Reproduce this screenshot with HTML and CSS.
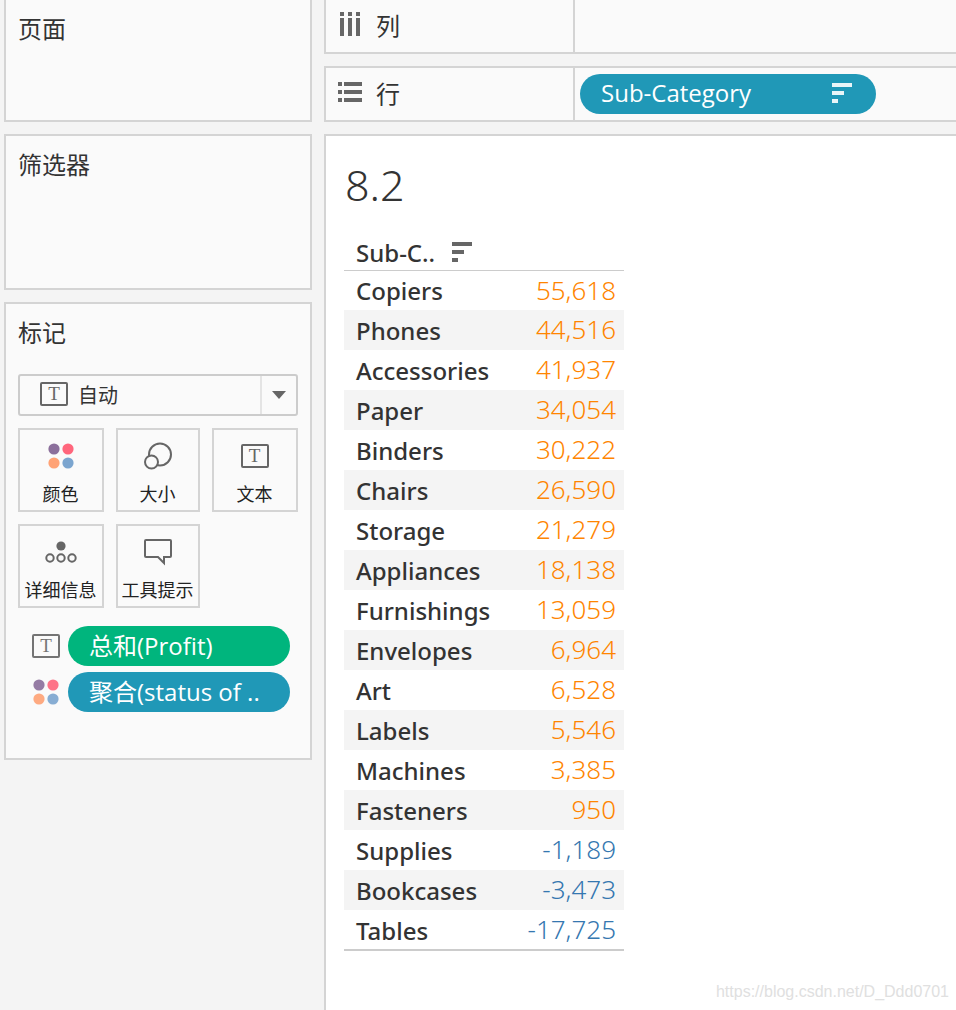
FILE: index.html
```html
<!DOCTYPE html>
<html lang="zh-CN">
<head>
<meta charset="utf-8">
<meta name="viewport" content="width=device-width, initial-scale=1">
<title>8.2</title>
<link rel="stylesheet" href="styles.css">
</head>
<body>
<svg class="defs" aria-hidden="true">
  <symbol id="icon-color" viewBox="0 0 28 28">
    <circle cx="7" cy="7" r="5.6" fill="#8b6f9b"/>
    <circle cx="21" cy="7" r="5.6" fill="#ff667c"/>
    <circle cx="7" cy="21" r="5.6" fill="#ffa275"/>
    <circle cx="21" cy="21" r="5.6" fill="#7ba5cf"/>
  </symbol>
  <symbol id="icon-sort" viewBox="0 0 20 20">
    <path d="M0 0h20v4H0zM0 8h12v4H0zM0 16h6v4H0z" fill="currentColor"/>
  </symbol>
</svg>
<div class="workspace">
  <aside class="sidebar">
    <section class="card pages"><h2 class="card-title">页面</h2></section>
    <section class="card filters"><h2 class="card-title">筛选器</h2></section>
    <section class="card marks">
      <h2 class="card-title">标记</h2>
      <div class="mark-type">
        <span class="mark-type-icon text-icon" aria-hidden="true">T</span>
        <select class="mark-select" aria-label="标记"><option>自动</option></select>
        <span class="mark-arrow"><svg width="14" height="8" viewBox="0 0 14 8" aria-hidden="true"><path d="M0 0h14L7 8z" fill="#666"/></svg></span>
      </div>
      <div class="mark-buttons">
        <button class="mark-button" type="button"><span class="mark-icon"><svg width="28" height="28" viewBox="0 0 28 28"><use href="#icon-color"/></svg></span>颜色</button>
        <button class="mark-button" type="button"><span class="mark-icon"><svg width="28" height="28" viewBox="0 0 28 28" fill="none" stroke="#666" stroke-width="2"><circle cx="16" cy="12.5" r="11"/><circle cx="7.5" cy="20" r="6.5" fill="#fafafa"/></svg></span>大小</button>
        <button class="mark-button" type="button"><span class="mark-icon"><span class="text-icon" aria-hidden="true">T</span></span>文本</button>
        <button class="mark-button" type="button"><span class="mark-icon"><svg width="32" height="24" viewBox="0 0 32 24" fill="none" stroke="#666" stroke-width="2"><circle cx="16" cy="6" r="4.6" fill="#666" stroke="none"/><circle cx="5" cy="18" r="3.7"/><circle cx="16" cy="18" r="3.7"/><circle cx="27" cy="18" r="3.7"/></svg></span>详细信息</button>
        <button class="mark-button" type="button"><span class="mark-icon"><svg width="28" height="28" viewBox="0 0 28 28" fill="none" stroke="#666" stroke-width="2"><path d="M2 2h24q1 0 1 1v15q0 1-1 1h-6v6l-6-6H2q-1 0-1-1V3q0-1 1-1z"/></svg></span>工具提示</button>
      </div>
      <ul class="mark-pills">
        <li class="mark-row"><span class="text-icon faded" aria-hidden="true">T</span><button class="pill measure" type="button">总和(Profit)</button></li>
        <li class="mark-row"><svg class="faded" width="28" height="28" aria-hidden="true"><use href="#icon-color"/></svg><button class="pill" type="button">聚合(status of ..</button></li>
      </ul>
    </section>
  </aside>
  <main class="main">
    <section class="shelf columns">
      <h2 class="shelf-name"><svg width="24" height="24" viewBox="0 0 24 24" aria-hidden="true"><path d="M2 0h4v4H2zM10 0h4v4h-4zM18 0h4v4h-4zM2 6h4v18H2zM10 6h4v18h-4zM18 6h4v18h-4z" fill="#666"/></svg>列</h2>
      <div class="shelf-fields"></div>
    </section>
    <section class="shelf rows">
      <h2 class="shelf-name"><svg width="24" height="20" viewBox="0 0 24 20" aria-hidden="true"><path d="M0 0h4v4H0zM0 8h4v4H0zM0 16h4v4H0zM6 0h18v4H6zM6 8h18v4H6zM6 16h18v4H6z" fill="#666"/></svg>行</h2>
      <div class="shelf-fields"><button class="pill row-pill" type="button">Sub-Category<svg class="pill-sort" width="20" height="20" aria-hidden="true"><use href="#icon-sort"/></svg></button></div>
    </section>
    <section class="view">
      <h1 class="view-title">8.2</h1>
      <table class="crosstab">
        <thead><tr><th colspan="2" scope="col"><span class="head">Sub-C..<svg width="20" height="20" aria-hidden="true"><use href="#icon-sort"/></svg></span></th></tr></thead>
        <tbody>
          <tr><th scope="row">Copiers</th><td>55,618</td></tr>
          <tr><th scope="row">Phones</th><td>44,516</td></tr>
          <tr><th scope="row">Accessories</th><td>41,937</td></tr>
          <tr><th scope="row">Paper</th><td>34,054</td></tr>
          <tr><th scope="row">Binders</th><td>30,222</td></tr>
          <tr><th scope="row">Chairs</th><td>26,590</td></tr>
          <tr><th scope="row">Storage</th><td>21,279</td></tr>
          <tr><th scope="row">Appliances</th><td>18,138</td></tr>
          <tr><th scope="row">Furnishings</th><td>13,059</td></tr>
          <tr><th scope="row">Envelopes</th><td>6,964</td></tr>
          <tr><th scope="row">Art</th><td>6,528</td></tr>
          <tr><th scope="row">Labels</th><td>5,546</td></tr>
          <tr><th scope="row">Machines</th><td>3,385</td></tr>
          <tr><th scope="row">Fasteners</th><td>950</td></tr>
          <tr><th scope="row">Supplies</th><td class="loss">-1,189</td></tr>
          <tr><th scope="row">Bookcases</th><td class="loss">-3,473</td></tr>
          <tr><th scope="row">Tables</th><td class="loss">-17,725</td></tr>
        </tbody>
      </table>
      <p class="watermark">https://blog.csdn.net/D_Ddd0701</p>
    </section>
  </main>
</div>
</body>
</html>
```
FILE: styles.css
```css
* { box-sizing: border-box; }
body, h1, h2, ul, p { margin: 0; padding: 0; }
body {
  background: #f4f4f4;
  color: #333;
  font-family: "Open Sans", "Noto Sans CJK SC", sans-serif;
  font-size: 24px;
}
button, select { font: inherit; color: inherit; margin: 0; }
svg { display: block; flex: none; }
.defs { position: absolute; width: 0; height: 0; }
.text-icon {
  display: block;
  width: 28px;
  height: 24px;
  border: 2px solid #666;
  border-radius: 2px;
  font-family: "Liberation Serif", serif;
  font-size: 19px;
  line-height: 20px;
  text-align: center;
  color: #666;
}

.workspace {
  display: grid;
  grid-template-columns: 308px 1fr;
  gap: 12px;
  min-height: 100vh;
  padding-left: 4px;
}
.sidebar { display: flex; flex-direction: column; gap: 12px; }
.card {
  background: #fafafa;
  border: 2px solid #d4d4d4;
  padding: 12px;
}
.card-title { font-family: "Noto Sans CJK SC", sans-serif; font-size: 24px; font-weight: 400; line-height: 32px; }
.pages { border-top: 0; min-height: 122px; }
.filters { min-height: 156px; }
.marks { min-height: 458px; }

.mark-type {
  display: grid;
  grid-template-columns: 1fr 36px;
  height: 42px;
  margin-top: 26px;
  border: 2px solid #ccc;
  border-radius: 3px;
}
.mark-type > * { grid-row: 1; }
.mark-type-icon { grid-column: 1; margin: 6px 0 0 20px; pointer-events: none; }
.mark-select {
  grid-column: 1 / 3;
  appearance: none;
  width: 100%;
  padding: 0 36px 2px 58px;
  border: 0;
  background: transparent;
  font-family: "Noto Sans CJK SC", sans-serif;
  font-size: 20px;
}
.mark-arrow {
  grid-column: 2;
  display: grid;
  place-items: center;
  border-left: 2px solid #e4e4e4;
  pointer-events: none;
}
.mark-buttons {
  display: grid;
  grid-template-columns: 86fr 84fr 86fr;
  gap: 12px;
  margin-top: 12px;
}
.mark-button {
  display: flex;
  flex-direction: column;
  align-items: center;
  height: 84px;
  padding: 8px 1px 0 0;
  border: 2px solid #d4d4d4;
  background: #fafafa;
  font-family: "Noto Sans CJK SC", sans-serif;
  font-size: 18px;
  line-height: 24px;
  white-space: nowrap;
  color: #222;
}
.mark-icon { display: grid; place-items: center; height: 36px; margin-bottom: 7px; }
.mark-pills { display: flex; flex-direction: column; gap: 6px; margin-top: 18px; list-style: none; }
.mark-row { display: grid; grid-template-columns: 28px 1fr; gap: 8px; align-items: center; padding: 0 8px 0 14px; }
.faded { opacity: 0.9; }
.pill {
  display: flex;
  align-items: center;
  height: 40px;
  padding: 0 24px 4px 21px;
  border: 0;
  border-radius: 20px;
  background: #2098b7;
  color: #fff;
  white-space: nowrap;
}
.measure { background: #00b57d; }

.main { display: flex; flex-direction: column; gap: 12px; min-width: 0; }
.shelf {
  display: grid;
  grid-template-columns: 249px 1fr;
  height: 56px;
  border: 2px solid #d4d4d4;
  border-right: 0;
  background: #fafafa;
}
.columns { height: 54px; border-top: 0; }
.shelf-name {
  display: flex;
  align-items: center;
  gap: 14px;
  padding: 0 0 4px 12px;
  border-right: 2px solid #d4d4d4;
  font-family: "Noto Sans CJK SC", sans-serif;
  font-size: 24px;
  font-weight: 400;
}
.shelf-fields { display: flex; align-items: center; padding-left: 5px; }
.row-pill { width: 296px; justify-content: space-between; }
.row-pill { padding-bottom: 3px; }
.pill-sort { color: #e9f5f8; }

.view {
  position: relative;
  flex: 1;
  padding: 24px 18px;
  border: 2px solid #d4d4d4;
  border-width: 2px 0 0 2px;
  background: #fff;
}
.view-title { padding-left: 1px; font-family: "Noto Sans", sans-serif; font-size: 43px; font-weight: 300; line-height: 50px; }
.crosstab {
  width: 280px;
  margin-top: 26px;
  border-collapse: separate;
  border-spacing: 0;
  border-bottom: 2px solid #ccc;
}
.crosstab th { padding: 2px 0 0 12px; text-align: left; font-family: "Noto Sans", sans-serif; font-weight: 500; line-height: 38px; }
.crosstab thead th { padding-top: 0; line-height: 34px; }
.head { display: flex; align-items: center; gap: 17px; }
.head svg { color: #666; margin-bottom: 2px; }
.crosstab td { padding: 0 8px 2px 0; text-align: right; vertical-align: top; font-family: "Noto Sans", sans-serif; font-size: 26px; font-weight: 300; line-height: 38px; color: #ff8500; }
.crosstab td.loss { color: #3577b0; }
.crosstab tbody tr:first-child > * { border-top: 1px solid #ccc; }
.crosstab tbody tr:first-child > th { padding-top: 1px; }
.crosstab tbody tr:first-child > td { padding-bottom: 1px; }
.crosstab tbody tr:last-child > th { line-height: 37px; }
.crosstab tbody tr:last-child > td { padding-bottom: 1px; }
.crosstab tbody tr:nth-child(even) > * { background: #f4f4f4; }
.watermark {
  position: absolute;
  right: 7px;
  bottom: 8px;
  font-family: "Liberation Sans", sans-serif;
  font-size: 16px;
  line-height: 20px;
  color: #e0e0e0;
}
```
